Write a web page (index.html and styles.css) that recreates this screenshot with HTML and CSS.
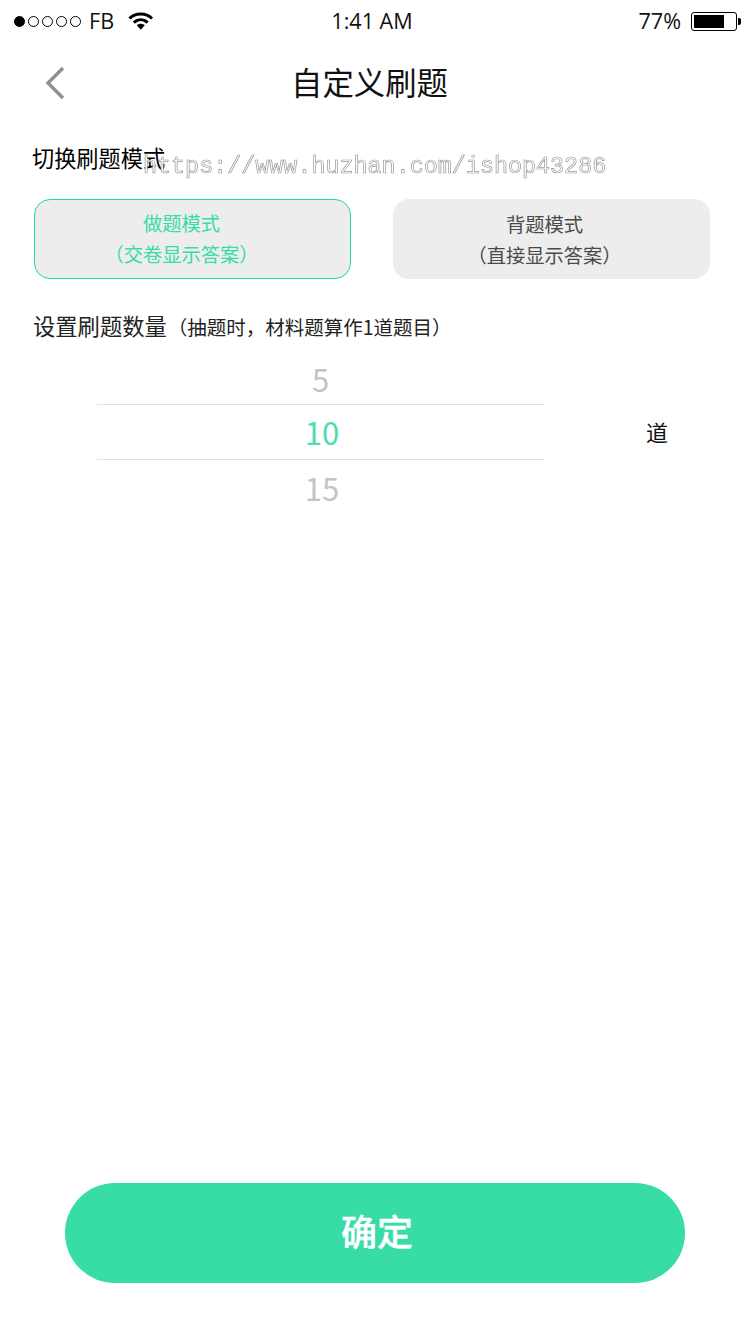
FILE: index.html
```html
<!DOCTYPE html>
<html lang="zh">
<head>
<meta charset="utf-8">
<title>自定义刷题</title>
<link rel="stylesheet" href="styles.css">
</head>
<body>
<div class="page">
  <header class="status">
    <div class="status-left">
      <span class="dots"><i class="dot on"></i><i class="dot"></i><i class="dot"></i><i class="dot"></i><i class="dot"></i></span>
      <span class="carrier">FB</span>
      <svg class="wifi" width="26" height="20" viewBox="0 0 26 20"><path d="M1.5 7.5C7.5 1.5 18 1.5 24 7.5" fill="none" stroke="#000" stroke-width="3"/><path d="M5.8 11.5C10 7.8 15.5 7.8 19.7 11.5" fill="none" stroke="#000" stroke-width="3"/><path d="M8.8 14.2 12.8 18.8 16.8 14.2C14.5 12.2 11 12.2 8.8 14.2Z" fill="#000"/></svg>
    </div>
    <div class="time">1:41 AM</div>
    <div class="status-right">
      <span class="pct">77%</span>
      <span class="battery"><span class="battery-fill"></span></span>
      <span class="battery-cap"></span>
    </div>
  </header>

  <nav class="nav">
    <svg class="back" width="22" height="34" viewBox="0 0 22 34"><path d="M19 2 4 17 19 32" fill="none" stroke="#8f8f8f" stroke-width="3.4"/></svg>
    <h1 class="title">自定义刷题</h1>
  </nav>

  <main class="content">
    <div class="label-mode">切换刷题模式</div>
    <div class="modes">
      <div class="mode active">做题模式<br>（交卷显示答案）</div>
      <div class="mode">背题模式<br>（直接显示答案）</div>
    </div>
    <div class="label-count">设置刷题数量<small>（抽题时，材料题算作1道题目）</small></div>
    <div class="picker-row">
      <div class="picker">
        <div class="pick first">5</div>
        <div class="pick current two">10</div>
        <div class="pick two">15</div>
      </div>
      <div class="unit">道</div>
    </div>
  </main>

  <footer class="footer">
    <button class="confirm">确定</button>
  </footer>

  <div class="watermark">https://www.huzhan.com/ishop43286</div>
</div>
</body>
</html>
```
FILE: styles.css
```css
* { box-sizing: border-box; }
html, body { margin: 0; padding: 0; background: #fff; }
body { font-family: "Noto Sans CJK SC", "Noto Sans", sans-serif; color: #000; }
.page { position: relative; width: 750px; height: 1334px; display: flex; flex-direction: column; overflow: hidden; }

.status { height: 42px; display: grid; grid-template-columns: 1fr auto 1fr; align-items: center; padding: 0 9px 0 14px; font-family: "Open Sans", sans-serif; font-size: 21.6px; color: #111; }
.status-left { display: flex; align-items: center; }
.dots { display: flex; gap: 3px; }
.dot { width: 11px; height: 11px; border: 1px solid #000; border-radius: 50%; display: block; }
.dot.on { background: #000; }
.carrier { margin-left: 8px; line-height: 28px; padding-bottom: 1px; }
.wifi { margin-left: 14px; }
.time { text-align: center; padding: 0 11px 2px 0; }
.status-right { display: flex; align-items: center; justify-content: flex-end; }
.pct { padding-bottom: 1px; margin-right: 1px; }
.battery { width: 46px; height: 19px; margin-left: 9px; border: 1px solid #000; border-radius: 3px; padding: 2px; display: block; }
.battery-fill { display: block; width: 30px; height: 13px; background: #000; }
.battery-cap { width: 3px; height: 7px; margin-left: 1px; background: #000; border-radius: 0 2px 2px 0; }

.nav { height: 82px; position: relative; display: flex; align-items: center; justify-content: center; padding: 0 11px 2px 0; }
.back { position: absolute; left: 44px; top: 24px; }
.title { margin: 0; font-size: 31.4px; font-weight: 400; line-height: 40px; color: #111; }

.content { flex: 1; padding: 18px 40px 0 34px; }
.label-mode { font-size: 22.2px; line-height: 30px; margin-left: -2px; }
.modes { display: flex; justify-content: space-between; margin-top: 27px; }
.mode { width: 317px; height: 80px; background: #ededed; border-radius: 16px; text-align: center; font-size: 19.3px; line-height: 31px; padding: 10px 14px 0 0; color: #4a4a4a; }
.mode.active { color: #37dca6; border: 1px solid #1fdca4; padding: 8px 22px 0 0; }
.label-count { margin: 30px 0 0 -1px; font-size: 22.3px; line-height: 32px; color: #222; }
.label-count small { font-size: 19.5px; margin-left: 1px; }

.picker-row { display: flex; align-items: center; margin-top: 6px; }
.picker { width: 447px; margin-left: 63px; }
.pick { height: 55px; display: flex; align-items: center; justify-content: center; font-size: 31px; color: #c4c4c4; }
.pick.first { padding-top: 3px; }
.pick.two { padding: 0 0 0 3px; }
.pick.current { color: #4fdcac; border-top: 1px solid #e2e2e2; border-bottom: 1px solid #e2e2e2; height: 56px; padding-bottom: 1px; }
.unit { margin-left: 102px; padding-bottom: 2px; font-size: 22px; color: #111; }

.footer { display: flex; justify-content: center; padding-bottom: 51px; }
.confirm { width: 620px; height: 100px; border: 0; border-radius: 50px; background: #38dca6; color: #fff; font-family: inherit; font-size: 36px; font-weight: 500; -webkit-text-stroke: 0.4px #fff; padding: 0 0 6px 4px; }

.watermark { position: absolute; left: 143px; top: 151px; font-family: "Liberation Mono", monospace; font-size: 23.4px; line-height: 32px; color: #fff; -webkit-text-stroke: 0.7px #999; white-space: nowrap; transform: translateZ(0); }
```
